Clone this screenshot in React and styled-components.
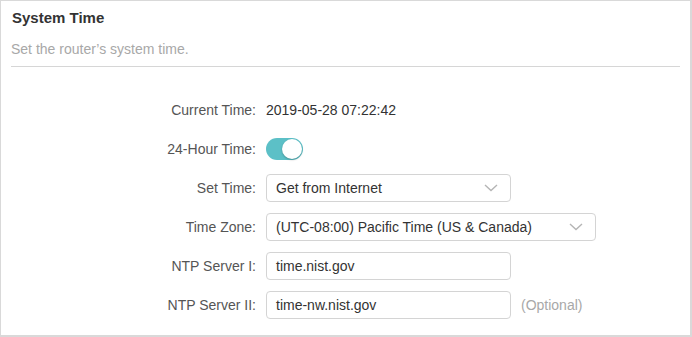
import React from "react";
import styled, { createGlobalStyle } from "styled-components";

const Global = createGlobalStyle`
  html, body { margin: 0; padding: 0; background: #fff; }
  body { font-family: "Liberation Sans", Arial, sans-serif; }
`;

const Panel = styled.div`
  box-sizing: border-box;
  width: 692px;
  height: 337px;
  border: 1px solid #d9d9d9;
  border-bottom-width: 2px;
  border-right-width: 2px;
  padding: 0 10px;
`;

const Title = styled.h2`
  margin: 0;
  padding: 7px 1px 0;
  font-size: 15px;
  font-weight: bold;
  color: #333;
  line-height: 20px;
`;

const Subtitle = styled.p`
  margin: 0;
  padding: 13px 0 8px;
  font-size: 14px;
  color: #a8a8a8;
  line-height: 17px;
  border-bottom: 1px solid #d6d6d6;
`;

const Form = styled.div`
  display: flex;
  flex-direction: column;
  gap: 11px;
  padding-top: 29px;
`;

const Row = styled.div`
  display: grid;
  grid-template-columns: 245px auto auto;
  justify-content: start;
  column-gap: 10px;
  align-items: center;
  height: 28px;
`;

const Label = styled.div`
  text-align: right;
  font-size: 14px;
  color: #555;
`;

const Value = styled.div`
  font-size: 14px;
  color: #333;
`;

const Switch = styled.div`
  position: relative;
  width: 37px;
  height: 22px;
  border-radius: 11px;
  background: #5cc0c7;
`;

const Knob = styled.div`
  position: absolute;
  right: 1px;
  top: 1px;
  width: 20px;
  height: 20px;
  border-radius: 50%;
  background: #fff;
  box-shadow: 0 1px 2px rgba(0, 0, 0, 0.25);
`;

const Field = styled.div`
  box-sizing: border-box;
  display: flex;
  align-items: center;
  justify-content: space-between;
  width: ${(p) => p.$w || 245}px;
  height: 28px;
  padding: 0 12px 0 9px;
  border: 1px solid #d4d4d4;
  border-radius: 4px;
  font-size: 14px;
  color: #333;
  background: #fff;
`;

const Hint = styled.span`
  font-size: 14px;
  color: #a8a8a8;
`;

const Chevron = () => (
  <svg width="14" height="8" viewBox="0 0 14 8" fill="none">
    <path d="M1 1l6 5.5L13 1" stroke="#b5b5b5" strokeWidth="1.4" />
  </svg>
);

export default function App() {
  return (
    <>
      <Global />
      <Panel>
        <Title>System Time</Title>
        <Subtitle>Set the router’s system time.</Subtitle>
        <Form>
          <Row>
            <Label>Current Time:</Label>
            <Value>2019-05-28 07:22:42</Value>
          </Row>
          <Row>
            <Label>24-Hour Time:</Label>
            <Switch>
              <Knob />
            </Switch>
          </Row>
          <Row>
            <Label>Set Time:</Label>
            <Field>
              Get from Internet
              <Chevron />
            </Field>
          </Row>
          <Row>
            <Label>Time Zone:</Label>
            <Field $w={330}>
              (UTC-08:00) Pacific Time (US &amp; Canada)
              <Chevron />
            </Field>
          </Row>
          <Row>
            <Label>NTP Server I:</Label>
            <Field>time.nist.gov</Field>
          </Row>
          <Row>
            <Label>NTP Server II:</Label>
            <Field>time-nw.nist.gov</Field>
            <Hint>(Optional)</Hint>
          </Row>
        </Form>
      </Panel>
    </>
  );
}
